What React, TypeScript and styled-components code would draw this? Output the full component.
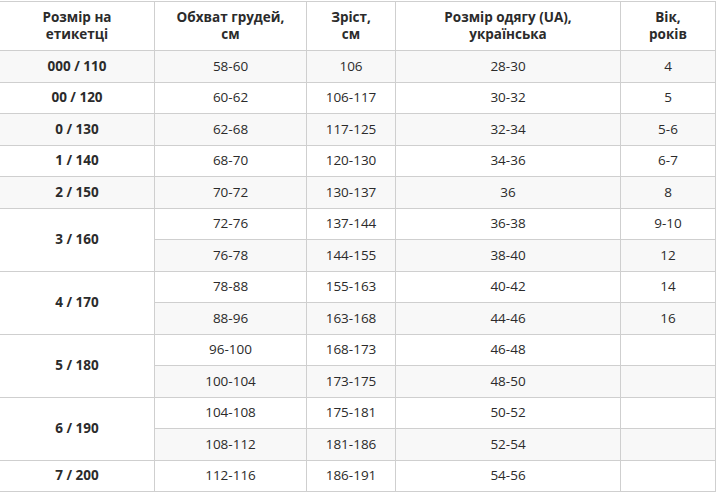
import styled, { createGlobalStyle } from 'styled-components';

const GlobalStyle = createGlobalStyle`
  html, body {
    margin: 0;
    padding: 0;
    background: #fff;
  }
  body {
    font-family: 'Open Sans', 'Liberation Sans', sans-serif;
    color: #2b2b2b;
  }
`;

const Page = styled.div`
  width: 720px;
  height: 494px;
  overflow: hidden;
  padding-top: 1px;
`;

const Table = styled.table`
  border-collapse: collapse;
  table-layout: fixed;
  width: 716px;
  margin-left: -1px;
  font-size: 13.5px;
`;

const HeadCell = styled.th`
  border: 1px solid #cfcfcf;
  height: 48px;
  padding: 0 4px;
  font-weight: 700;
  line-height: 17px;
  text-align: center;
  vertical-align: middle;
  color: #2b2b2b;
  background: #fff;
`;

const Row = styled.tr<{ $shaded: boolean }>`
  height: 31.5px;
  background: ${p => (p.$shaded ? '#f8f8f8' : '#fff')};
`;

const Cell = styled.td<{ $bold?: boolean; $plain?: boolean }>`
  border: 1px solid #cfcfcf;
  padding: 0 4px;
  text-align: center;
  vertical-align: middle;
  line-height: 17px;
  font-weight: ${p => (p.$bold ? 700 : 400)};
  color: #2b2b2b;
  ${p => p.$plain && 'background: #fff;'}
`;

type Group = {
  label: string;
  rows: [string, string, string, string][];
};

const groups: Group[] = [
  { label: '000 / 110', rows: [['58-60', '106', '28-30', '4']] },
  { label: '00 / 120', rows: [['60-62', '106-117', '30-32', '5']] },
  { label: '0 / 130', rows: [['62-68', '117-125', '32-34', '5-6']] },
  { label: '1 / 140', rows: [['68-70', '120-130', '34-36', '6-7']] },
  { label: '2 / 150', rows: [['70-72', '130-137', '36', '8']] },
  {
    label: '3 / 160',
    rows: [
      ['72-76', '137-144', '36-38', '9-10'],
      ['76-78', '144-155', '38-40', '12'],
    ],
  },
  {
    label: '4 / 170',
    rows: [
      ['78-88', '155-163', '40-42', '14'],
      ['88-96', '163-168', '44-46', '16'],
    ],
  },
  {
    label: '5 / 180',
    rows: [
      ['96-100', '168-173', '46-48', ''],
      ['100-104', '173-175', '48-50', ''],
    ],
  },
  {
    label: '6 / 190',
    rows: [
      ['104-108', '175-181', '50-52', ''],
      ['108-112', '181-186', '52-54', ''],
    ],
  },
  { label: '7 / 200', rows: [['112-116', '186-191', '54-56', '']] },
];

export default function App() {
  let index = 0;
  return (
    <Page>
      <GlobalStyle />
      <Table>
        <colgroup>
          <col style={{ width: 155 }} />
          <col style={{ width: 152 }} />
          <col style={{ width: 89 }} />
          <col style={{ width: 225 }} />
          <col style={{ width: 95 }} />
        </colgroup>
        <thead>
          <tr>
            <HeadCell>
              Розмір на
              <br />
              етикетці
            </HeadCell>
            <HeadCell>
              Обхват грудей,
              <br />
              см
            </HeadCell>
            <HeadCell>
              Зріст,
              <br />
              см
            </HeadCell>
            <HeadCell>
              Розмір одягу (UA),
              <br />
              українська
            </HeadCell>
            <HeadCell>
              Вік,
              <br />
              років
            </HeadCell>
          </tr>
        </thead>
        <tbody>
          {groups.map(group =>
            group.rows.map((r, i) => {
              index += 1;
              const shaded = index % 2 === 1;
              return (
                <Row key={`${group.label}-${i}`} $shaded={shaded}>
                  {i === 0 && (
                    <Cell
                      $bold
                      $plain={group.rows.length > 1}
                      rowSpan={group.rows.length}
                    >
                      {group.label}
                    </Cell>
                  )}
                  {r.map((v, j) => (
                    <Cell key={j}>{v}</Cell>
                  ))}
                </Row>
              );
            })
          )}
        </tbody>
      </Table>
    </Page>
  );
}
